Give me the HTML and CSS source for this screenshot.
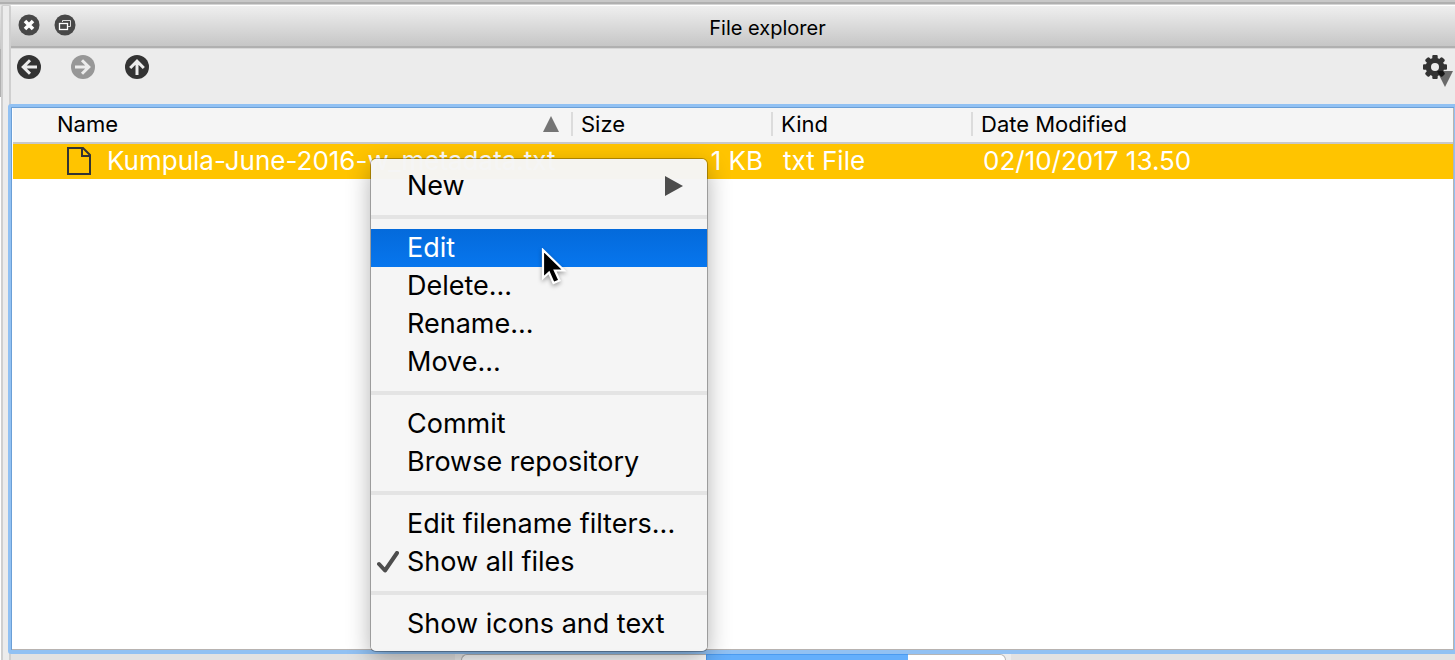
FILE: index.html
```
<!DOCTYPE html>
<html lang="en">
<head>
<meta charset="utf-8">
<title>File explorer</title>
<link rel="stylesheet" href="styles.css">
</head>
<body>
<div class="top-edge"></div>
<div class="workspace">
  <div class="outer-edge"></div>
  <div class="splitter"></div>
  <main class="dock">
    <header class="titlebar">
      <div class="window-buttons">
        <button class="round-button" type="button" aria-label="Close">
          <svg viewBox="0 0 22 22" width="22" height="22"><circle cx="11" cy="11" r="10.5" fill="#484848"/><path d="M7 7l8 8M15 7l-8 8" stroke="#fff" stroke-width="3.6"/></svg>
        </button>
        <button class="round-button" type="button" aria-label="Float">
          <svg viewBox="0 0 22 22" width="22" height="22" fill="none"><circle cx="11" cy="11" r="10.5" fill="#484848"/><path d="M8.500 8V6.500h8v6H14" stroke="#ddd" stroke-width="1"/><rect x="5.500" y="9.500" width="8" height="6" stroke="#fff" stroke-width="1.300"/></svg>
        </button>
      </div>
      <h1 class="title">File explorer</h1>
    </header>
    <nav class="toolbar" aria-label="Navigation">
      <button class="tool" type="button" aria-label="Back">
        <svg viewBox="0 0 24 24" width="24" height="24"><circle cx="12" cy="12" r="12" fill="#333"/><path d="M20 12H7M13 5.200L6.200 12l6.800 6.800" fill="none" stroke="#ececec" stroke-width="3"/></svg>
      </button>
      <button class="tool" type="button" aria-label="Forward" disabled>
        <svg viewBox="0 0 24 24" width="24" height="24"><circle cx="12" cy="12" r="12" fill="#979797"/><path d="M4 12h13M11 5.200l6.800 6.800-6.800 6.800" fill="none" stroke="#ececec" stroke-width="3"/></svg>
      </button>
      <button class="tool" type="button" aria-label="Up">
        <svg viewBox="0 0 24 24" width="24" height="24"><circle cx="12" cy="12" r="12" fill="#333"/><path d="M12 20V7M5.200 13L12 6.200l6.800 6.800" fill="none" stroke="#ececec" stroke-width="3"/></svg>
      </button>
      <button class="tool settings" type="button" aria-label="Settings">
        <svg viewBox="0 0 32 34" width="32" height="34"><g fill="#333"><circle cx="13" cy="13" r="9.300"/><rect x="10.300" y="1" width="5.400" height="24" rx="1"/><rect x="1" y="10.300" width="24" height="5.400" rx="1"/><g transform="rotate(45 13 13)"><rect x="10.300" y="1" width="5.400" height="24" rx="1.500"/><rect x="1" y="10.300" width="24" height="5.400" rx="1.500"/></g></g><circle cx="13" cy="13" r="4" fill="#ececec"/><path d="M15 17h16l-8 16z" fill="#000" fill-opacity=".55"/></svg>
      </button>
    </nav>
    <section class="file-view">
      <table class="files">
        <thead>
          <tr>
            <th class="name" scope="col"><div class="head"><span>Name</span><svg viewBox="0 0 16 16" width="16" height="16"><path d="M8 0l8 16H0z" fill="#757575"/></svg></div></th>
            <th class="size" scope="col"><div class="head">Size</div></th>
            <th class="kind" scope="col"><div class="head">Kind</div></th>
            <th scope="col"><div class="head">Date Modified</div></th>
          </tr>
        </thead>
        <tbody>
          <tr>
            <td><div class="file"><svg viewBox="0 0 24 28" width="24" height="28" fill="none" stroke="#333" stroke-width="2"><path d="M1 1h15l7 7v19H1z"/><path d="M15 1v8h8"/></svg>Kumpula-June-2016-w_metadata.txt</div></td>
            <td class="number">1 KB</td>
            <td>txt File</td>
            <td>02/10/2017 13.50</td>
          </tr>
        </tbody>
      </table>
    </section>
    <footer class="tab-strip">
      <div class="tabs"><div class="tab"></div><div class="tab active"></div><div class="tab last"></div></div>
    </footer>
  </main>
</div>
<div class="menu" role="menu">
  <button class="item" type="button" role="menuitem">New<svg viewBox="0 0 18 20" width="18" height="20"><path d="M0 0l18 10L0 20z" fill="#4d4d4d"/></svg></button>
  <hr>
  <button class="item selected" type="button" role="menuitem">Edit</button>
  <button class="item" type="button" role="menuitem">Delete...</button>
  <button class="item" type="button" role="menuitem">Rename...</button>
  <button class="item" type="button" role="menuitem">Move...</button>
  <hr>
  <button class="item" type="button" role="menuitem">Commit</button>
  <button class="item" type="button" role="menuitem">Browse repository</button>
  <hr>
  <button class="item" type="button" role="menuitem">Edit filename filters...</button>
  <button class="item" type="button" role="menuitemcheckbox" aria-checked="true"><svg class="check" viewBox="0 0 22 22" width="22" height="22"><path d="M2 13l6 6.500L20 2" fill="none" stroke="#4d4d4d" stroke-width="4" stroke-linecap="round" stroke-linejoin="round"/></svg>Show all files</button>
  <hr>
  <button class="item" type="button" role="menuitem">Show icons and text</button>
</div>
<svg class="cursor" viewBox="0 0 26 38" width="26" height="38"><path d="M2 2v28l6-5.500 4.500 10.500 6-2.500-4.600-10H23z" fill="#000" stroke="#fff" stroke-width="2.200"/></svg>
</body>
</html>
```
FILE: styles.css
```
* {
  box-sizing: border-box;
}

body {
  margin: 0;
  height: 100vh;
  display: flex;
  flex-direction: column;
  overflow: hidden;
  background: #ececec;
  color: #000;
  font-family: Inter, Roboto, sans-serif;
}

button {
  margin: 0;
  padding: 0;
  border: 0;
  background: none;
  color: inherit;
  font: inherit;
}

svg {
  display: block;
  flex: none;
}

.top-edge {
  height: 5px;
  flex: none;
  background: linear-gradient(#c8c8c8 2px, #b0b0b0 2px, #b0b0b0 4px, #d4d4d4 4px);
}

.workspace {
  flex: 1;
  min-height: 0;
  display: flex;
}

.outer-edge {
  width: 1px;
  background: linear-gradient(#e8e8e8, #c6c6c6 44px, #b0b0b0 44px, #b0b0b0 92px, #fff 92px);
}

.splitter {
  width: 10px;
  flex: none;
  border: solid #cfcfcf;
  border-width: 1px 2px 0;
  border-radius: 2px 2px 0 0;
}

.dock {
  flex: 1;
  min-width: 0;
  display: flex;
  flex-direction: column;
}

.titlebar {
  height: 43px;
  flex: none;
  display: grid;
  grid-template-columns: 62px 1fr;
  align-items: center;
  padding-left: 7px;
  border-top: 1px solid #fff;
  border-bottom: 2px solid #b0b0b0;
  background: linear-gradient(#efefef, #c6c6c6);
}

.window-buttons {
  display: flex;
  gap: 14px;
  padding-bottom: 2px;
}

.title {
  margin: 0;
  padding-top: 4px;
  font-size: 20px;
  line-height: 24px;
  font-weight: 400;
  text-align: center;
}

.toolbar {
  height: 56px;
  flex: none;
  display: flex;
  align-items: flex-start;
  gap: 30px;
  padding: 6px 1px 0 6px;
  border-top: 1px solid #d8d8d8;
}

.tool {
  width: 24px;
  height: 24px;
}

.settings {
  width: 32px;
  margin-left: auto;
  margin-top: -1px;
}

.file-view {
  flex: 1;
  min-height: 0;
  margin-left: -3px;
  border: 4px solid #91c1f3;
  border-top-width: 3px;
  border-right-width: 1px;
  border-left-width: 3px;
  border-radius: 3px 0 0 3px;
  background: #fff;
  box-shadow: inset 1px 1px #6b9fd6, inset -1px -1px #b8b3b0;
  padding: 1px 1px 1px 2px;
}

.files {
  width: 100%;
  table-layout: fixed;
  border-collapse: collapse;
}

.name {
  width: 560px;
}

.size,
.kind {
  width: 200px;
}

.files th {
  height: 35px;
  padding: 0 0 2px;
  background: #f5f5f5;
  border-bottom: 2px solid #c9c9c9;
  font-size: 22px;
  font-weight: 400;
  text-align: left;
}

.head {
  height: 24px;
  display: flex;
  align-items: center;
  justify-content: space-between;
  padding-left: 8px;
  line-height: 24px;
}

.name .head {
  padding-left: 44px;
  padding-right: 12px;
}

.name .head,
.size .head,
.kind .head {
  border-right: 2px solid #dcdcdc;
}

.files td {
  height: 36px;
  padding: 0 10px 2px;
  background: #ffc400;
  color: #fff;
  font-size: 26px;
  font-weight: 400;
  line-height: 32px;
  white-space: nowrap;
}

.files .number {
  text-align: right;
}

.file {
  display: flex;
  align-items: center;
  gap: 16px;
  padding-left: 44px;
}

.tab-strip {
  height: 6px;
  flex: none;
  display: grid;
  grid-template-columns: 444fr 556fr 444fr;
  background: #e2e2e2;
  overflow: hidden;
}

.tabs {
  grid-column: 2;
  display: flex;
  padding: 0 5px 0 6px;
  background: #ececec;
}

.tab {
  height: 20px;
  flex: 245;
  border: 1px solid #b5b5b5;
  border-right: 0;
  border-radius: 6px 0 0 0;
  background: #fff;
}

.tab.active {
  flex: 202;
  border-color: #4b9bf0;
  border-radius: 0;
  background: #64affc;
}

.tab.last {
  flex: 98;
  border-left: 0;
  border-right: 1px solid #b5b5b5;
  border-radius: 0 6px 0 0;
}

.menu {
  position: absolute;
  left: 371px;
  top: 159px;
  width: 336px;
  padding: 8px 0;
  border-radius: 5px;
  background: rgba(245, 245, 245, 0.98);
  box-shadow: 0 0 0 1px rgba(0, 0, 0, 0.28), 0 8px 24px rgba(0, 0, 0, 0.32);
}

.item {
  position: relative;
  width: 100%;
  height: 38px;
  display: flex;
  align-items: center;
  justify-content: space-between;
  padding: 0 24px 1px 36px;
  font-size: 27px;
  line-height: 37px;
  text-align: left;
  white-space: nowrap;
}

.item.selected {
  background: linear-gradient(#046adb, #0776ee);
  color: #fff;
}

.menu hr {
  height: 4px;
  margin: 10px 0;
  border: 0;
  background: #e4e4e4;
}

.check {
  position: absolute;
  left: 6px;
  top: 8px;
}

.cursor {
  position: absolute;
  left: 541px;
  top: 248px;
  filter: drop-shadow(0 2px 2px rgba(0, 0, 0, 0.35));
}
```
